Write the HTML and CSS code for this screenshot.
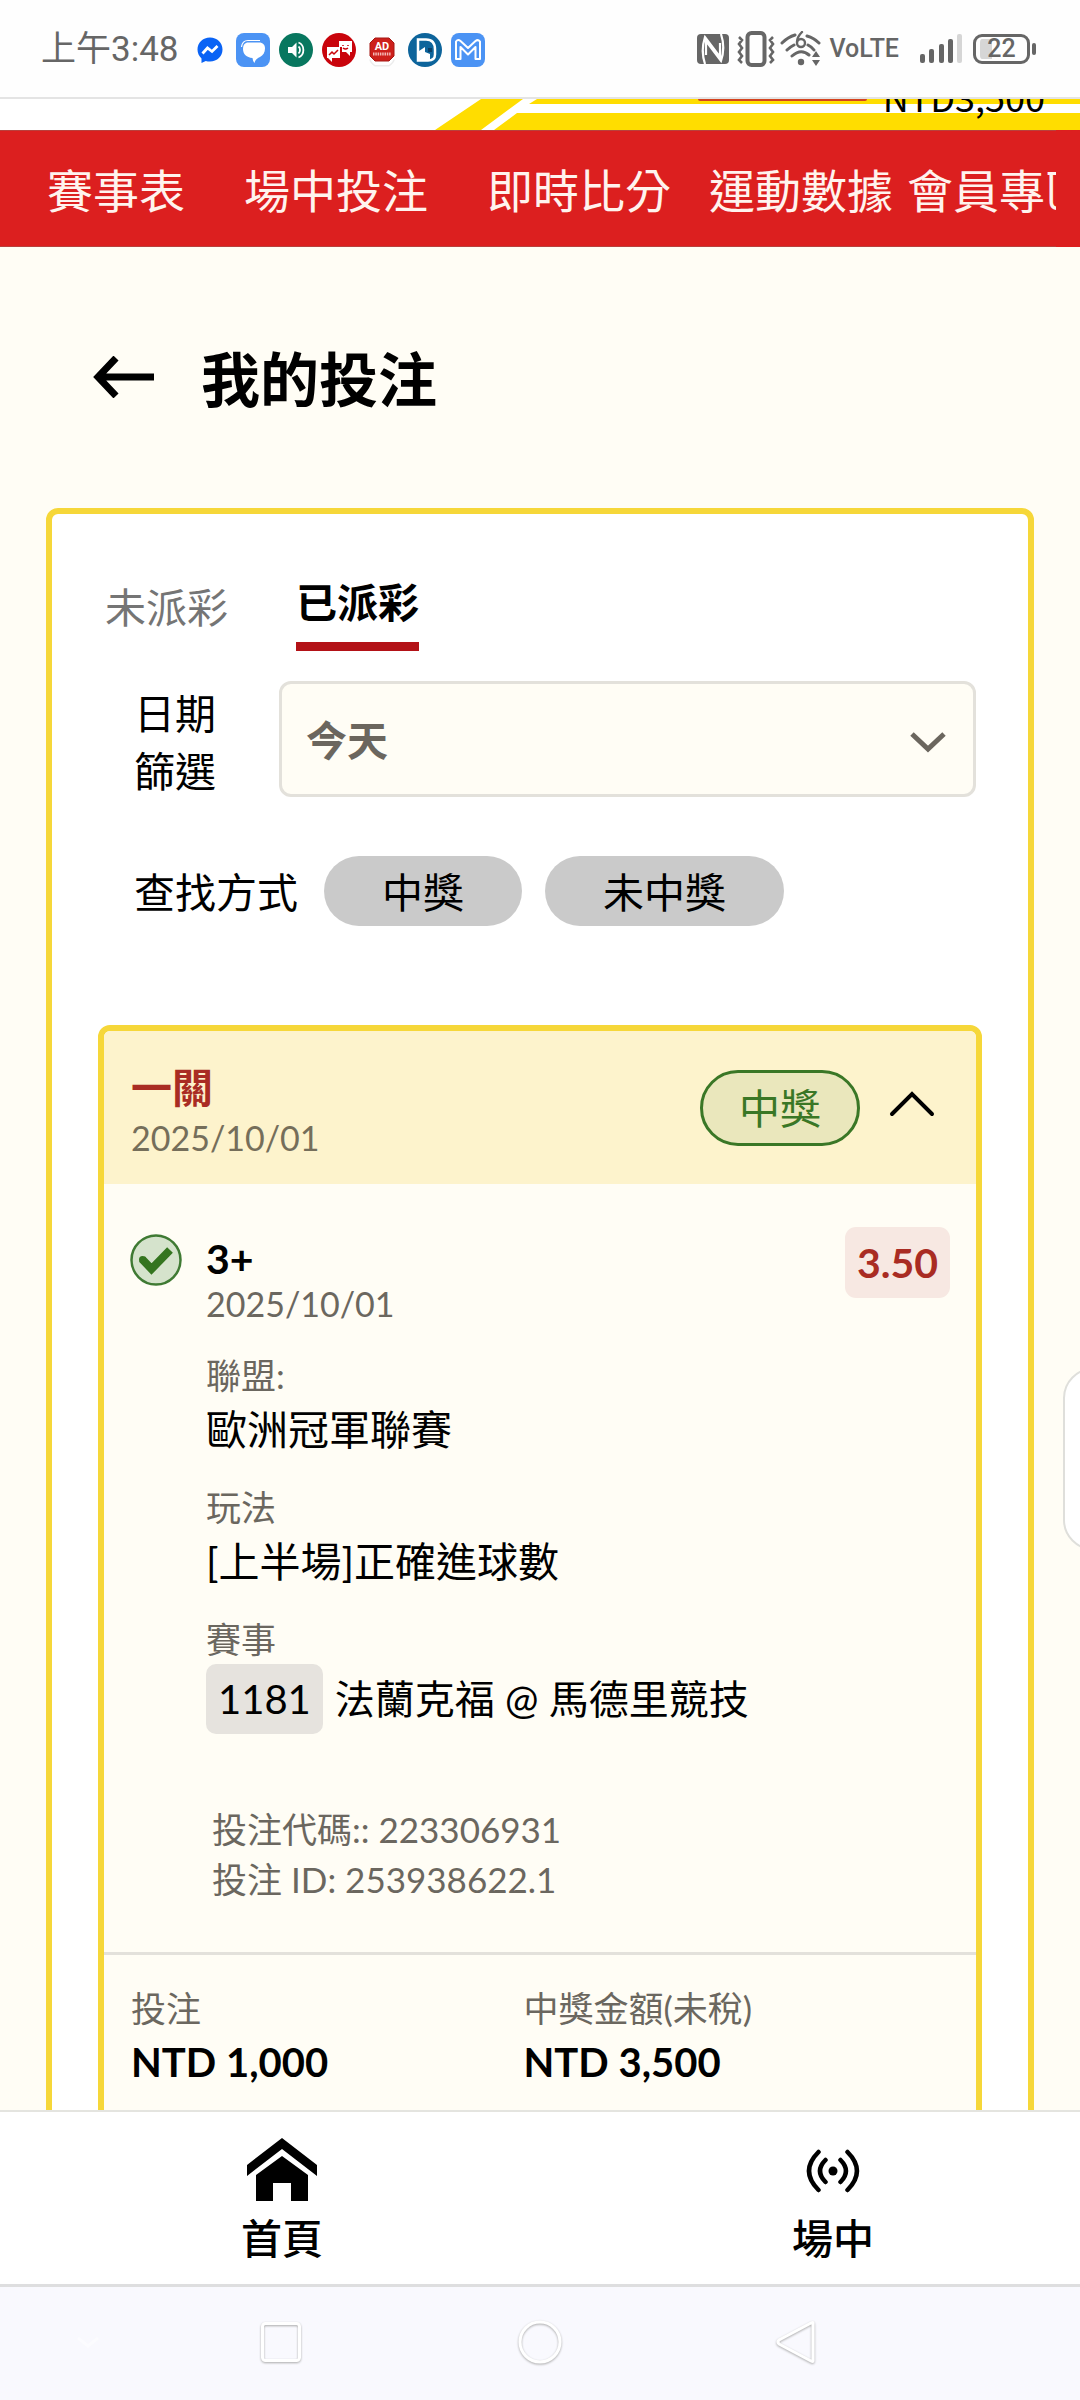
FILE: index.html
```html
<!DOCTYPE html>
<html lang="zh-Hant">
<head>
<meta charset="utf-8">
<meta name="viewport" content="width=device-width, initial-scale=1">
<title>我的投注</title>
<link rel="stylesheet" href="styles.css">
</head>
<body>
<div class="app">

  <header class="status">
    <time class="status-time">上午3:48</time>
    <div class="status-apps">
      <svg class="app-icon" viewBox="0 0 34 34" aria-hidden="true">
        <path fill="#0a63f5" d="M17 4.500C9.800 4.500 4.500 9.800 4.500 16.500c0 3.600 1.500 6.700 4 8.900V30l4.300-2.100c1.300.4 2.700.5 4.200.5 7.200 0 12.500-5.200 12.500-11.900S24.200 4.500 17 4.500z"/>
        <path fill="none" stroke="#fff" stroke-width="2.800" d="M9.500 20.500l5-5.500 4.500 3.500 5.500-5.500"/>
      </svg>
      <svg class="app-icon" viewBox="0 0 34 34" aria-hidden="true">
        <rect width="34" height="34" rx="8" fill="#4b93f4"/>
        <path fill="#fff" d="M11 9.500h12c4 0 6 2.500 6 6 0 4-2 7-5 8.500-3 1.500-4.500 2.500-5.500 6-1.500-1.500-1.500-3-2-5C10.500 24.500 7 21 7 16c0-3.500 1-5.500 4-6.500z"/>
        <path fill="none" stroke="#fff" stroke-width="1.200" d="M5.500 14c.5-4 3-6.500 6.500-6.500h12"/>
      </svg>
      <svg class="app-icon" viewBox="0 0 34 34" aria-hidden="true">
        <circle cx="17" cy="17" r="17" fill="#08775f"/>
        <path fill="#fff" d="M9 14h4l4.500-4.500v15L13 20H9z"/>
        <path fill="none" stroke="#fff" stroke-width="1.800" d="M19.500 13.500c2 1.500 2 5.500 0 7M19.500 9.500c6.500 2.500 6.500 12.500 0 15"/>
      </svg>
      <svg class="app-icon" viewBox="0 0 34 34" aria-hidden="true">
        <circle cx="17" cy="17" r="17" fill="#c9040c"/>
        <path fill="#fff" d="M17 8h13v11h-2v4l-4-4h-4v-5h-3z"/>
        <path fill="#fff" d="M5 14h13v11h-8v4l-4-4H5z"/>
        <path fill="none" stroke="#c9040c" stroke-width="1.500" d="M7 22l3-3 2 2 4-4M21 12v1M26 12v1M21 15q2.500 2 5 0"/>
      </svg>
      <svg class="app-icon" viewBox="0 0 34 34" aria-hidden="true">
        <path fill="#ececec" d="M10 33.500a13 13 0 0 1-6-7h26a13 13 0 0 1-6 7z"/>
        <path fill="#fff" d="M10 32a12 12 0 0 1-5-7h24a12 12 0 0 1-5 7z"/>
        <path fill="#cd201c" stroke="#a51814" d="M10 5h14l5 5v13l-5 5H10l-5-5V10z"/>
        <text x="17" y="17" class="ad-word">AD</text>
        <path stroke="#f3b7b4" stroke-width="3" stroke-dasharray="1.500 .8" d="M8 21h18"/>
      </svg>
      <svg class="app-icon" viewBox="0 0 34 34" aria-hidden="true">
        <circle cx="17" cy="17" r="17" fill="#0d649b"/>
        <path fill="none" stroke="#fff" stroke-width="2.500" d="M10 6.500h8c6 0 9 4 9 10v5c0 4-3 6-7 6H10z"/>
        <path fill="#fff" d="M11 18l6-4v5l5 2v6H11z"/>
        <path fill="#0b3f66" d="M20 15h4v4h-4z"/>
      </svg>
      <svg class="app-icon" viewBox="0 0 34 34" aria-hidden="true">
        <rect width="34" height="34" rx="8" fill="#4b93f4"/>
        <path fill="none" stroke="#fff" stroke-width="2" stroke-linejoin="round" d="M5 8.500q2-2.500 4.500-.5l7.500 7 7.500-7q2.500-2 4.500.5V26h-4.500V14L17 21.500 9.500 14v12H5z"/>
      </svg>
    </div>
    <div class="status-signals">
      <svg class="icon-nfc" viewBox="0 0 32 32" aria-hidden="true">
        <rect x="0" y="1" width="32" height="30" rx="4" fill="#666"/>
        <path fill="none" stroke="#fff" stroke-width="2.200" d="M8 31c-3-9-3-18 0-27l15 20V10M24 1c3 9 3 18 0 27L9 8v14"/>
      </svg>
      <svg class="icon-vibrate" viewBox="0 0 38 36" aria-hidden="true">
        <rect x="10.500" y="2" width="17" height="32" rx="4" fill="none" stroke="#666" stroke-width="4"/>
        <path fill="none" stroke="#666" stroke-width="2.600" d="M2 6l3 3-3 4 3 4-3 4 3 4-3 4 3 3M36 6l-3 3 3 4-3 4 3 4-3 4 3 4-3 3"/>
      </svg>
      <svg class="icon-wifi" viewBox="0 0 42 36" aria-hidden="true">
        <g fill="none" stroke="#666" stroke-width="3" stroke-linecap="round">
          <path d="M2 12q6-6 13-8M27 5q7 2 12 7M7 19q3-3 7-5M28 14q4 2 6 5M12 25q9-8 17-1"/>
          <path stroke-width="2.400" d="M22 1c-4 4-5 8-5 10"/>
          <circle cx="21" cy="12" r="4" stroke-width="2.400"/>
        </g>
        <circle cx="21" cy="31" r="3.200" fill="#666"/>
        <path fill="#666" d="M36 20l4 6h-8zM36 35l-4-6h8z"/>
      </svg>
      <span class="volte">VoLTE</span>
      <svg class="icon-bars" viewBox="0 0 45 30" aria-hidden="true">
        <g fill="#666">
          <rect x="1" y="20" width="5" height="9" rx="2"/><rect x="10" y="15" width="5" height="14" rx="2"/>
          <rect x="20" y="10" width="5" height="19" rx="2"/><rect x="29" y="5" width="5" height="24" rx="2"/>
        </g>
        <rect x="38" y="0" width="5" height="29" rx="2" fill="#d6d6d6"/>
      </svg>
      <span class="battery">22</span>
    </div>
  </header>

  <div class="banner">
    <svg class="banner-art" viewBox="0 0 650 31" preserveAspectRatio="xMinYMid slice" aria-hidden="true">
      <path fill="#ffdd00" d="M3 31L49 0h42L49 31zM62 31l23-17h565v17zM97 5l8-5h545v5z"/>
    </svg>
    <span class="banner-button"></span>
    <span class="banner-balance">NTD3,500</span>
  </div>

  <nav class="menu">
    <a class="menu-item" href="#schedule">賽事表</a>
    <a class="menu-item" href="#inplay">場中投注</a>
    <a class="menu-item" href="#scores">即時比分</a>
    <a class="menu-item" href="#stats">運動數據</a>
    <a class="menu-item" href="#member">會員專區</a>
  </nav>

  <main class="content">
    <div class="page-head">
      <a class="back" href="#back" aria-label="返回">
        <svg viewBox="0 0 62 42" aria-hidden="true"><path fill="none" stroke="#000" stroke-width="7" d="M61 21H6M23 2L5 21l18 19"/></svg>
      </a>
      <h1 class="page-title">我的投注</h1>
    </div>

    <section class="panel">
      <div class="tabs" role="tablist">
        <button class="tab" type="button" role="tab" aria-selected="false">未派彩</button>
        <button class="tab tab-active" type="button" role="tab" aria-selected="true">已派彩</button>
      </div>

      <div class="filter">
        <label class="filter-label" for="date">日期篩選</label>
        <div class="select-wrap">
          <select class="select" id="date"><option>今天</option></select>
          <svg class="select-arrow" viewBox="0 0 38 22" aria-hidden="true"><path fill="none" stroke="#6b665e" stroke-width="5" d="M3 3l16 15L35 3"/></svg>
        </div>
      </div>

      <div class="search-by">
        <span class="search-label">查找方式</span>
        <div class="pills">
          <button class="pill" type="button">中獎</button>
          <button class="pill" type="button">未中獎</button>
        </div>
      </div>

      <article class="bet">
        <header class="bet-head">
          <div>
            <h2 class="bet-title">一關</h2>
            <div class="bet-date">2025/10/01</div>
          </div>
          <div class="bet-state">
            <span class="won">中獎</span>
            <button class="collapse" type="button" aria-label="收合">
              <svg viewBox="0 0 46 36" aria-hidden="true"><path fill="none" stroke="#000" stroke-width="4" stroke-linecap="round" d="M3 24L23 4l20 20"/></svg>
            </button>
          </div>
        </header>

        <div class="bet-body">
          <svg class="check" viewBox="0 0 52 52" aria-hidden="true">
            <circle cx="26" cy="26" r="24.500" fill="#d5e3cc" stroke="#3f7a33" stroke-width="2.500"/>
            <path fill="none" stroke="#34751f" stroke-width="8" stroke-linejoin="miter" d="M12 25l9.500 10L40 16"/>
            <circle cx="12.500" cy="25.500" r="3.500" fill="#34751f"/>
          </svg>
          <div class="bet-detail">
            <h3 class="pick">3+</h3>
            <div class="pick-date">2025/10/01</div>
            <dl class="facts">
              <div><dt>聯盟:</dt><dd>歐洲冠軍聯賽</dd></div>
              <div><dt>玩法</dt><dd>[上半場]正確進球數</dd></div>
              <div><dt>賽事</dt><dd class="match"><span class="match-no">1181</span><span>法蘭克福 @ 馬德里競技</span></dd></div>
            </dl>
            <div class="codes">
              <div>投注代碼:: 223306931</div>
              <div>投注 ID: 253938622.1</div>
            </div>
          </div>
          <span class="odds">3.50</span>
        </div>

        <dl class="totals">
          <div><dt>投注</dt><dd>NTD 1,000</dd></div>
          <div><dt>中獎金額(未稅)</dt><dd>NTD 3,500</dd></div>
        </dl>
      </article>
    </section>
  </main>

  <nav class="tabbar">
    <a class="tabbar-item" href="#home">
      <svg class="tabbar-icon" viewBox="0 0 70 64" aria-hidden="true">
        <path d="M0 27L35 0l35 27v11L35 11 0 38z"/>
        <path d="M9 37l26-19 26 19v26H44V45H26v18H9z"/>
      </svg>
      <span>首頁</span>
    </a>
    <a class="tabbar-item" href="#live">
      <svg class="tabbar-icon" viewBox="0 0 70 64" aria-hidden="true">
        <circle cx="35" cy="33" r="4.500"/>
        <g fill="none" stroke="#000" stroke-width="4.500" stroke-linecap="round">
          <path d="M27.500 22q-11 11 0 22M42.500 22q11 11 0 22M20.500 14q-19 19 0 38M49.500 14q19 19 0 38"/>
        </g>
      </svg>
      <span>場中</span>
    </a>
  </nav>

  <footer class="sysnav">
    <svg class="sys-icon sys-hide" viewBox="0 0 44 44" aria-hidden="true"><path d="M12 18l10 8 10-8"/></svg>
    <svg class="sys-icon" viewBox="0 0 44 44" aria-hidden="true"><rect x="3.500" y="3.500" width="37" height="37" rx="3"/></svg>
    <svg class="sys-icon" viewBox="0 0 44 44" aria-hidden="true"><circle cx="22" cy="22" r="20"/></svg>
    <svg class="sys-icon" viewBox="0 0 44 44" aria-hidden="true"><path stroke-linejoin="round" d="M38 3v38q0 1-2 0L4 24q-2-2 0-4L36 3q2-1 2 0z"/></svg>
  </footer>

  <div class="edge-tab"></div>
</div>
</body>
</html>
```
FILE: styles.css
```css
* { box-sizing: border-box; margin: 0; padding: 0; }

:root {
  --cream: #fffdf5;
  --gold: #f6d739;
  --muted: #6b675f;
  --line: #e3e1db;
  --red: #a92c23;
  --green: #3a7726;
}

body {
  font-family: Lato, "Noto Sans CJK TC", sans-serif;
  font-size: 41px;
  line-height: 58px;
  color: #000;
  background: var(--cream);
}

a { color: inherit; text-decoration: none; }
button { border: 0; background: none; font: inherit; color: inherit; }
svg { display: block; flex: none; }

.app {
  position: relative;
  display: flex;
  flex-direction: column;
  height: 100vh;
  overflow: hidden;
}

/* Phone status bar */
.status {
  display: flex;
  align-items: center;
  height: 99px;
  padding: 0 43px 0 41px;
  border-bottom: 2px solid #e4e4e4;
  background: #fefefe;
  color: #666;
}
.status-time { width: 152px; padding-top: 3px; font: 400 35px/40px Roboto, "Noto Sans CJK TC", sans-serif; }
.status-apps { display: flex; gap: 9px; padding-top: 3px; }
.app-icon { width: 34px; height: 34px; }
.ad-word { font: 700 11px Roboto, sans-serif; fill: #fff; text-anchor: middle; }
.status-signals { display: flex; align-items: center; margin-left: auto; }
.icon-nfc { width: 32px; height: 32px; }
.icon-vibrate { width: 38px; height: 36px; margin-left: 8px; }
.icon-wifi { width: 42px; height: 36px; margin-left: 5px; }
.volte { margin-left: 7px; font: 500 25px/36px Roboto, sans-serif; }
.icon-bars { width: 45px; height: 30px; margin-left: 20px; }
.battery {
  position: relative;
  width: 57px;
  height: 30px;
  margin: 0 7px 0 9px;
  border: 3px solid #666;
  border-radius: 9px;
  background: linear-gradient(to right, #d6d6d6 16px, transparent 16px);
  background-clip: content-box;
  padding: 2px 4px;
  font: 500 25px/20px Roboto, sans-serif;
  text-align: center;
}
.battery::after {
  content: "";
  position: absolute;
  left: 56px;
  top: 6px;
  width: 4px;
  height: 12px;
  border-radius: 2px;
  background: #666;
}

/* Lower edge of the site banner, scrolled under the status bar */
.banner {
  position: relative;
  display: flex;
  justify-content: flex-end;
  align-items: flex-end;
  height: 31px;
  padding-right: 35px;
  overflow: hidden;
  background: #fff;
}
.banner-art { position: absolute; left: 40%; top: 0; width: 60%; height: 31px; }
.banner-button {
  position: relative;
  align-self: flex-start;
  width: 169px;
  height: 2px;
  margin-right: 16px;
  border-radius: 0 0 6px 6px;
  background: #d4431f;
}
.banner-balance { position: relative; font: 400 36px/40px "Noto Sans CJK TC", sans-serif; padding-bottom: 14px; }

.menu {
  display: flex;
  flex: none;
  height: 117px;
  padding-left: 47px;
  border-right: 24px solid #dc1f1f;
  overflow: hidden;
  background: #dc1f1f;
  box-shadow: inset 0 1px #b9403c, inset 0 -1px #b9403c;
}
.menu-item {
  flex: none;
  padding-right: 59px;
  color: #fff3ee;
  font-size: 46px;
  line-height: 122px;
}
.menu-item:nth-child(3) { padding-right: 38px; }
.menu-item:nth-child(4) { padding-right: 14px; }

.content {
  flex: 1 1 0;
  min-height: 0;
  overflow-y: auto;
  scrollbar-width: none;
}

.page-head { display: flex; align-items: center; gap: 46px; padding: 90px 93px 91px; }
.back svg { width: 62px; height: 42px; }
.page-title { padding-top: 6px; font-size: 59px; line-height: 74px; font-weight: 700; }

.panel {
  margin: 0 46px;
  padding: 60px 46px 60px;
  border: 6px solid var(--gold);
  border-radius: 12px;
  background: #fff;
}

.tabs { display: flex; align-items: flex-end; gap: 68px; padding-left: 7px; }
.tab { padding-bottom: 14px; color: #757575; }
.tab-active { padding-bottom: 10px; border-bottom: 9px solid #b31217; color: #000; font-weight: 700; }

.filter { display: flex; align-items: flex-start; gap: 63px; margin: 30px 6px 0 36px; }
.filter-label { flex: none; width: 2em; padding-top: 4px; }
.select-wrap { position: relative; flex: 1; }
.select {
  display: block;
  appearance: none;
  width: 100%;
  height: 116px;
  padding: 4px 90px 0 24px;
  border: 3px solid var(--line);
  border-radius: 12px;
  background: var(--cream);
  color: #6b665e;
  font: inherit;
  font-weight: 700;
}
.select-arrow { position: absolute; right: 29px; top: 50px; width: 38px; height: 22px; pointer-events: none; }

.search-by { display: flex; align-items: center; gap: 26px; margin: 55px 0 0 36px; }
.search-label { padding-top: 4px; }
.pills { display: flex; gap: 23px; }
.pill { padding: 8px 58px 4px; border-radius: 35px; background: #cacaca; }

.bet {
  margin-top: 99px;
  border: 6px solid var(--gold);
  border-radius: 12px;
  background: var(--cream);
}
.bet-head {
  display: flex;
  justify-content: space-between;
  padding: 30px 41px 23px 27px;
  border-radius: 6px 6px 0 0;
  background: #fdf3cc;
}
.bet-title { font-size: 41px; line-height: 54px; font-weight: 700; color: var(--red); }
.bet-date { font-size: 34px; line-height: 46px; color: #756e5a; }
.bet-state { display: flex; align-items: center; align-self: flex-start; gap: 29px; padding-top: 9px; }
.won {
  padding: 7px 36px 5px;
  border: 3px solid var(--green);
  border-radius: 38px;
  background: #eae7bc;
  color: var(--green);
}
.collapse svg { width: 46px; height: 36px; }

.bet-body { display: flex; align-items: flex-start; padding: 43px 26px 48px; }
.check { width: 52px; height: 52px; margin-top: 7px; }
.bet-detail { flex: 1; margin: 7px 0 0 24px; }
.pick { font-size: 41px; line-height: 50px; font-weight: 700; }
.pick-date { font-size: 34px; line-height: 40px; color: var(--muted); }
.odds {
  flex: none;
  padding: 7px 12px 6px;
  border-radius: 11px;
  background: #f7e8e2;
  color: var(--red);
  font-weight: 700;
}
.facts { display: grid; gap: 22px; margin-top: 26px; }
dt { font-size: 35px; line-height: 50px; color: var(--muted); }
.facts dd { line-height: 60px; }
.facts .match { display: flex; align-items: center; gap: 12px; font-size: 40px; line-height: 70px; }
.match-no { padding: 0 12px; border-radius: 10px; background: #e6e3de; }
.codes { margin: 70px 0 0 6px; font-size: 35px; line-height: 50px; color: var(--muted); }

.totals {
  display: grid;
  grid-template-columns: 392fr 425fr;
  padding: 28px 27px 60px;
  border-top: 3px solid var(--line);
}
.totals dd { font-size: 40px; font-weight: 700; }

.tabbar {
  display: flex;
  justify-content: space-between;
  padding: 26px 206px 16px 241px;
  border-top: 2px solid #e4e4df;
  background: #fff;
  font-weight: 500;
}
.tabbar-item { display: flex; flex-direction: column; align-items: center; gap: 8px; }
.tabbar-icon { width: 70px; height: 64px; }

.sysnav {
  display: grid;
  grid-template-columns: 176fr 210fr 308fr 206fr 180fr;
  place-items: center;
  height: 116px;
  padding-bottom: 3px;
  border-top: 3px solid #dededf;
  background: #f9f9fe;
}
.sys-icon {
  width: 44px;
  height: 44px;
  overflow: visible;
  fill: none;
  stroke: #fff;
  stroke-width: 3;
  filter: drop-shadow(0 1px 1px #aaa);
}
.sys-hide { filter: none; opacity: 0.5; }

/* Handle of the phone's side panel, mostly off the screen */
.edge-tab {
  position: absolute;
  right: -43px;
  top: 57%;
  width: 60px;
  height: 182px;
  border: 2px solid #dfdfdb;
  border-radius: 30px;
  background: #fff;
}
```
